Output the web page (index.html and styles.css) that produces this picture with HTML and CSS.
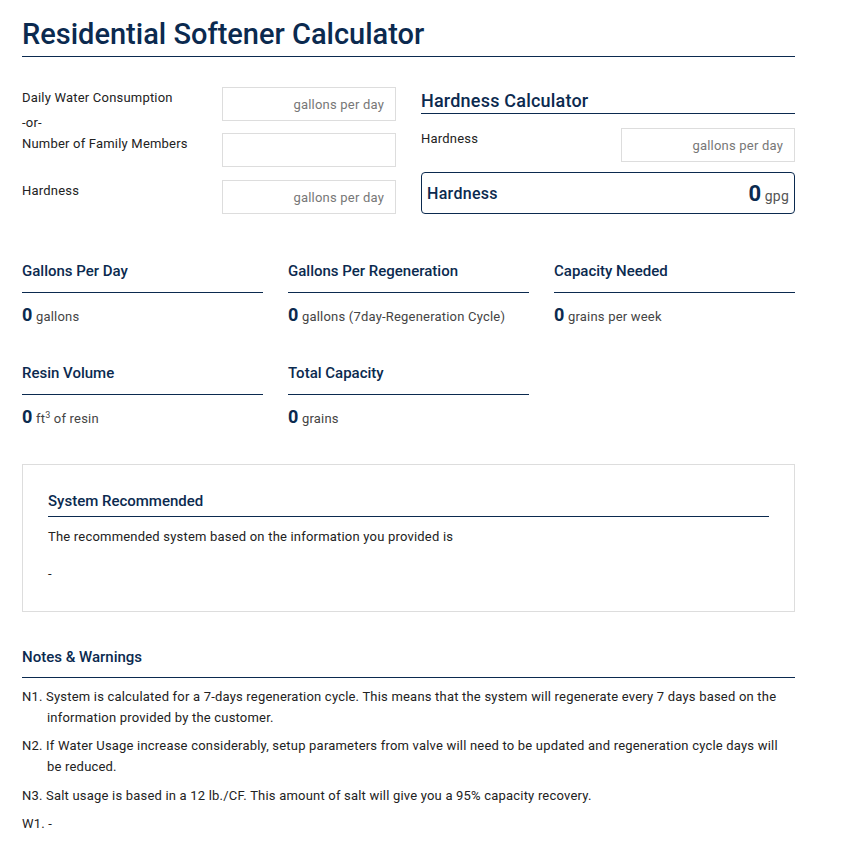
FILE: index.html
```html
<!DOCTYPE html>
<html>
<head>
<meta charset="utf-8">
<link rel="stylesheet" href="styles.css">
</head>
<body>
<div class="page">
  <h1 class="title">Residential Softener Calculator</h1>

  <div class="top">
    <div class="form">
      <div class="form-row">
        <div class="form-label">Daily Water Consumption</div>
        <div class="input"><span class="ph">gallons per day</span></div>
      </div>
      <div class="or">-or-</div>
      <div class="form-row form-row-family">
        <div class="form-label">Number of Family Members</div>
        <div class="input"></div>
      </div>
      <div class="form-row form-row-hard">
        <div class="form-label">Hardness</div>
        <div class="input"><span class="ph">gallons per day</span></div>
      </div>
    </div>

    <div class="hcalc">
      <h2 class="hcalc-title">Hardness Calculator</h2>
      <div class="hcalc-row">
        <div class="form-label">Hardness</div>
        <div class="input"><span class="ph">gallons per day</span></div>
      </div>
      <div class="hresult">
        <span class="hresult-label">Hardness</span>
        <span class="hresult-val"><b>0</b> <span class="unit-lg">gpg</span></span>
      </div>
    </div>
  </div>

  <div class="stats">
    <div class="stat">
      <h3 class="stat-title">Gallons Per Day</h3>
      <div class="stat-val"><b>0</b> <span class="unit">gallons</span></div>
    </div>
    <div class="stat">
      <h3 class="stat-title">Gallons Per Regeneration</h3>
      <div class="stat-val"><b>0</b> <span class="unit">gallons (7day-Regeneration Cycle)</span></div>
    </div>
    <div class="stat">
      <h3 class="stat-title">Capacity Needed</h3>
      <div class="stat-val"><b>0</b> <span class="unit">grains per week</span></div>
    </div>
    <div class="stat">
      <h3 class="stat-title">Resin Volume</h3>
      <div class="stat-val"><b>0</b> <span class="unit">ft<sup>3</sup> of resin</span></div>
    </div>
    <div class="stat">
      <h3 class="stat-title">Total Capacity</h3>
      <div class="stat-val"><b>0</b> <span class="unit">grains</span></div>
    </div>
  </div>

  <div class="reco">
    <h3 class="reco-title">System Recommended</h3>
    <p class="reco-text">The recommended system based on the information you provided is</p>
    <p class="reco-dash">-</p>
  </div>

  <div class="notes">
    <h3 class="notes-title">Notes &amp; Warnings</h3>
    <p class="note">N1. System is calculated for a 7-days regeneration cycle. This means that the system will regenerate every 7 days based on the information provided by the customer.</p>
    <p class="note">N2. If Water Usage increase considerably, setup parameters from valve will need to be updated and regeneration cycle days will be reduced.</p>
    <p class="note">N3. Salt usage is based in a 12 lb./CF. This amount of salt will give you a 95% capacity recovery.</p>
    <p class="note">W1. -</p>
  </div>
</div>
</body>
</html>
```

FILE: styles.css
```css
* { box-sizing: border-box; }
body {
  margin: 0;
  background: #fff;
  font-family: Roboto, "Liberation Sans", sans-serif;
  color: #222;
  font-size: 13px;
  letter-spacing: 0.2px;
}
.page {
  width: 773px;
  margin-left: 22px;
  padding-top: 14px;
}
.title {
  margin: 0;
  font-size: 29px;
  font-weight: 500;
  letter-spacing: 0;
  line-height: 40px;
  color: #0b2a4f;
  padding-bottom: 2px;
  border-bottom: 1px solid #0b2a4f;
}
.top {
  display: flex;
  margin-top: 30px;
  gap: 25px;
}
.form {
  width: 374px;
}
.form-row {
  display: flex;
  justify-content: space-between;
}
.form-label {
  padding-top: 3px;
  line-height: 15px;
  color: #222;
}
.input {
  width: 174px;
  height: 34px;
  border: 1px solid #ddd;
  display: flex;
  align-items: center;
  justify-content: flex-end;
  padding-right: 11px;
}
.ph {
  color: #777;
  font-size: 13px;
}
.or {
  margin-top: -6px;
  height: 18px;
  line-height: 15px;
}
.form-row-hard { margin-top: 13px; }
.hcalc {
  flex: 1;
}
.hcalc-title {
  margin: 0;
  font-size: 18px;
  font-weight: 500;
  letter-spacing: 0.2px;
  color: #0b2a4f;
  line-height: 22px;
  padding-top: 3px;
  padding-bottom: 1px;
  border-bottom: 1px solid #0b2a4f;
}
.hcalc-row {
  display: flex;
  justify-content: space-between;
  margin-top: 14px;
}
.hcalc-row .form-label { padding-top: 3px; }
.hresult {
  margin-top: 10px;
  height: 42px;
  border: 1px solid #0b2a4f;
  border-radius: 4px;
  display: flex;
  align-items: center;
  justify-content: space-between;
  padding: 0 5px 0 5px;
}
.hresult-label {
  font-size: 16px;
  font-weight: 500;
  letter-spacing: 0.3px;
  color: #0b2a4f;
}
.hresult-val b {
  font-size: 22px;
  font-weight: 700;
  color: #0b2a4f;
}
.unit-lg {
  font-size: 14px;
  color: #555;
}
.stats {
  display: grid;
  grid-template-columns: repeat(3, 241px);
  column-gap: 25px;
  row-gap: 35px;
  margin-top: 47px;
}
.stat-title {
  margin: 0;
  font-size: 15px;
  font-weight: 500;
  letter-spacing: 0;
  color: #0b2a4f;
  line-height: 20px;
  padding-bottom: 11px;
  border-bottom: 1px solid #0b2a4f;
}
.stat-val {
  margin-top: 11px;
  line-height: 22px;
}
.stat-val b {
  font-size: 18px;
  font-weight: 700;
  color: #0b2a4f;
}
.unit {
  font-size: 13px;
  color: #444;
}
.unit sup {
  font-size: 9px;
  line-height: 0;
}
.reco {
  margin-top: 34px;
  border: 1px solid #ddd;
  padding: 26px 25px 28px 25px;
}
.reco-title {
  margin: 0;
  font-size: 15px;
  font-weight: 500;
  letter-spacing: 0;
  color: #0b2a4f;
  line-height: 20px;
  padding-bottom: 5px;
  border-bottom: 1px solid #0b2a4f;
}
.reco-text {
  margin: 11px 0 0;
  line-height: 18px;
}
.reco-dash {
  margin: 19px 0 0;
  line-height: 18px;
}
.notes {
  margin-top: 35px;
}
.notes-title {
  margin: 0;
  font-size: 15px;
  font-weight: 500;
  letter-spacing: 0;
  color: #0b2a4f;
  line-height: 20px;
  padding-bottom: 10px;
  border-bottom: 1px solid #0b2a4f;
}
.note {
  margin: 7.3px 0 0;
  line-height: 21px;
  padding-left: 25px;
  text-indent: -25px;
}
.notes-title + .note { margin-top: 8px; }
```
